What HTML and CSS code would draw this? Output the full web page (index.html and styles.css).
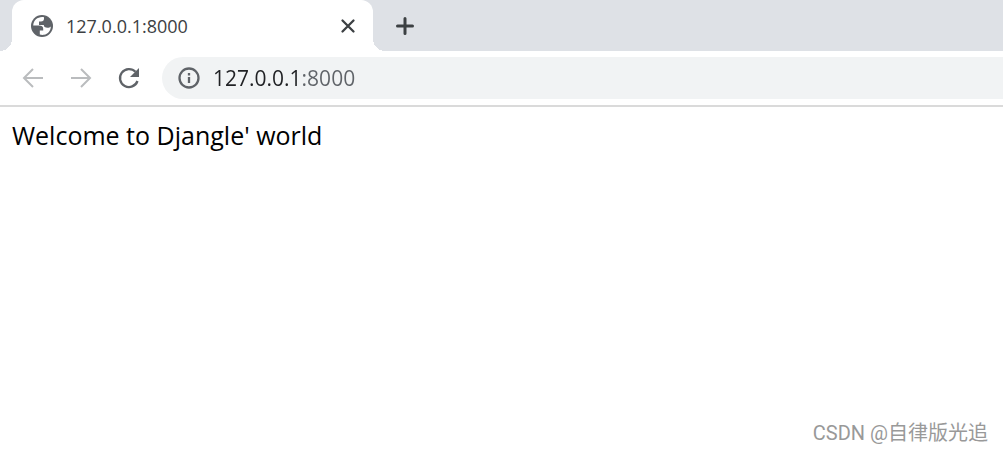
FILE: index.html
```
<!DOCTYPE html>
<html lang="en">

<head>
    <meta charset="UTF-8">
    <meta name="viewport" content="width=device-width, initial-scale=1.0">
    <title>127.0.0.1:8000</title>
    <link rel="stylesheet" href="styles.css">
</head>

<body>
    <header class="browser">
        <div class="tab-strip">
            <div class="tab">
                <svg class="favicon" viewBox="0 0 24 24" aria-hidden="true">
                    <circle cx="12" cy="12" r="11" fill="#5f6368" />
                    <path d="M14 3.300C8.500 2.200 3.500 6 3.200 11.500H9c2.500 0 4.200 1.200 4.200 3.200v1.800H9.800v4c1.200.4 2.800.6 4.200.3 4-.8 6.800-4.200 6.800-8.300-.8.900-1.800 1.300-3.300 1.300-2.300 0-3.700-1-3.700-2.800H9V7.600h2c2 0 3-1.300 3-2.800z" fill="#fff" />
                </svg>
                <span class="tab-title">127.0.0.1:8000</span>
                <button class="icon-button close" type="button" aria-label="Close tab">
                    <svg viewBox="0 0 20 20"><path d="M4.500 4.500l11 11M15.500 4.500l-11 11" /></svg>
                </button>
            </div>
            <button class="icon-button new-tab" type="button" aria-label="New tab">
                <svg viewBox="0 0 24 24"><path d="M12 4.500v15M4.500 12h15" /></svg>
            </button>
        </div>

        <nav class="toolbar">
            <button class="icon-button" type="button" aria-label="Back" disabled>
                <svg viewBox="0 0 24 24"><path d="M22 12H3M12 3l-9 9 9 9" /></svg>
            </button>
            <button class="icon-button" type="button" aria-label="Forward" disabled>
                <svg viewBox="0 0 24 24"><path d="M2 12h19M12 3l9 9-9 9" /></svg>
            </button>
            <button class="icon-button" type="button" aria-label="Reload">
                <svg viewBox="0 0 24 24">
                    <path d="M20.500 15A9 9 0 1 1 18.500 5.800" />
                    <path class="solid" d="M22 2v9h-9z" />
                </svg>
            </button>
            <div class="address-bar">
                <svg class="info" viewBox="0 0 24 24" aria-hidden="true">
                    <circle cx="12" cy="12" r="9.500" />
                    <path d="M12 11v6M12 7v2.500" />
                </svg>
                <input class="address" type="text" value="127.0.0.1:8000" aria-label="Address" spellcheck="false">
            </div>
        </nav>
    </header>

    <main class="page">Welcome to Djangle' world</main>

    <footer class="watermark">CSDN @自律版光追</footer>
</body>

</html>
```

FILE: styles.css
```
body {
    margin: 0;
    min-height: 100vh;
    display: flex;
    flex-direction: column;
    font-family: "Open Sans", "Noto Sans", sans-serif;
    background-color: #fff;
    color: #000;
}

.browser {
    border-bottom: 2px solid #dadada;
}

.tab-strip {
    display: flex;
    align-items: center;
    height: 51px;
    padding-left: 12px;
    background-color: #dee1e6;
}

.tab {
    position: relative;
    display: flex;
    align-items: center;
    box-sizing: border-box;
    flex: 0 1 361px;
    height: 100%;
    padding: 0 15px 0 18px;
    border-radius: 12px 12px 0 0;
    background-color: #fff;
}

/* Curved feet of the active tab */
.tab::before,
.tab::after {
    content: "";
    position: absolute;
    bottom: 0;
    width: 12px;
    height: 12px;
}

.tab::before {
    right: 100%;
    background: radial-gradient(circle at 0 0, transparent 12px, #fff 12px);
}

.tab::after {
    left: 100%;
    background: radial-gradient(circle at 100% 0, transparent 12px, #fff 12px);
}

.favicon {
    width: 24px;
    height: 24px;
    margin-right: 12px;
}

.tab-title {
    flex: 1;
    font-size: 18px;
    line-height: 24px;
    color: #3c4043;
}

.icon-button {
    display: flex;
    padding: 0;
    border: none;
    background: none;
    color: #5f6368;
    cursor: pointer;
}

.icon-button svg {
    width: 24px;
    height: 24px;
    fill: none;
    stroke: currentColor;
    stroke-width: 2.3;
}

.icon-button .solid {
    fill: currentColor;
    stroke: none;
}

.icon-button:disabled {
    color: #babcbe;
    cursor: default;
}

.icon-button:disabled svg {
    stroke-width: 2;
}

.close,
.new-tab {
    color: #3c4043;
}

.close svg {
    width: 20px;
    height: 20px;
    stroke-linecap: round;
}

.new-tab {
    margin-left: 20px;
}

.new-tab svg {
    stroke-width: 3;
    stroke-linecap: round;
}

.toolbar {
    display: flex;
    align-items: center;
    gap: 24px;
    padding: 6px 0 6px 21px;
}

.address-bar {
    display: flex;
    align-items: center;
    flex: 1;
    height: 42px;
    margin-left: -3px;
    padding-left: 15px;
    border-radius: 21px 0 0 21px;
    background-color: #f1f3f4;
}

.info {
    width: 24px;
    height: 24px;
    margin-right: 12px;
    fill: none;
    stroke: #5f6368;
    stroke-width: 2.3;
}

/* Host is dark, port is grey */
.address {
    flex: 1;
    min-width: 0;
    padding: 0;
    border: none;
    outline: none;
    font: 21px/30px "Open Sans", "Noto Sans", sans-serif;
    color: #202124;
    background: linear-gradient(to right, #202124 89px, #5f6368 89px);
    -webkit-background-clip: text;
    background-clip: text;
    -webkit-text-fill-color: transparent;
}

.page {
    flex: 1;
    padding: 12px;
    font-size: 25px;
    line-height: 32px;
}

.watermark {
    padding: 0 15px 4px;
    font-family: Roboto, "Noto Sans CJK SC", sans-serif;
    font-size: 20px;
    line-height: 28px;
    text-align: right;
    color: #999;
}
```
